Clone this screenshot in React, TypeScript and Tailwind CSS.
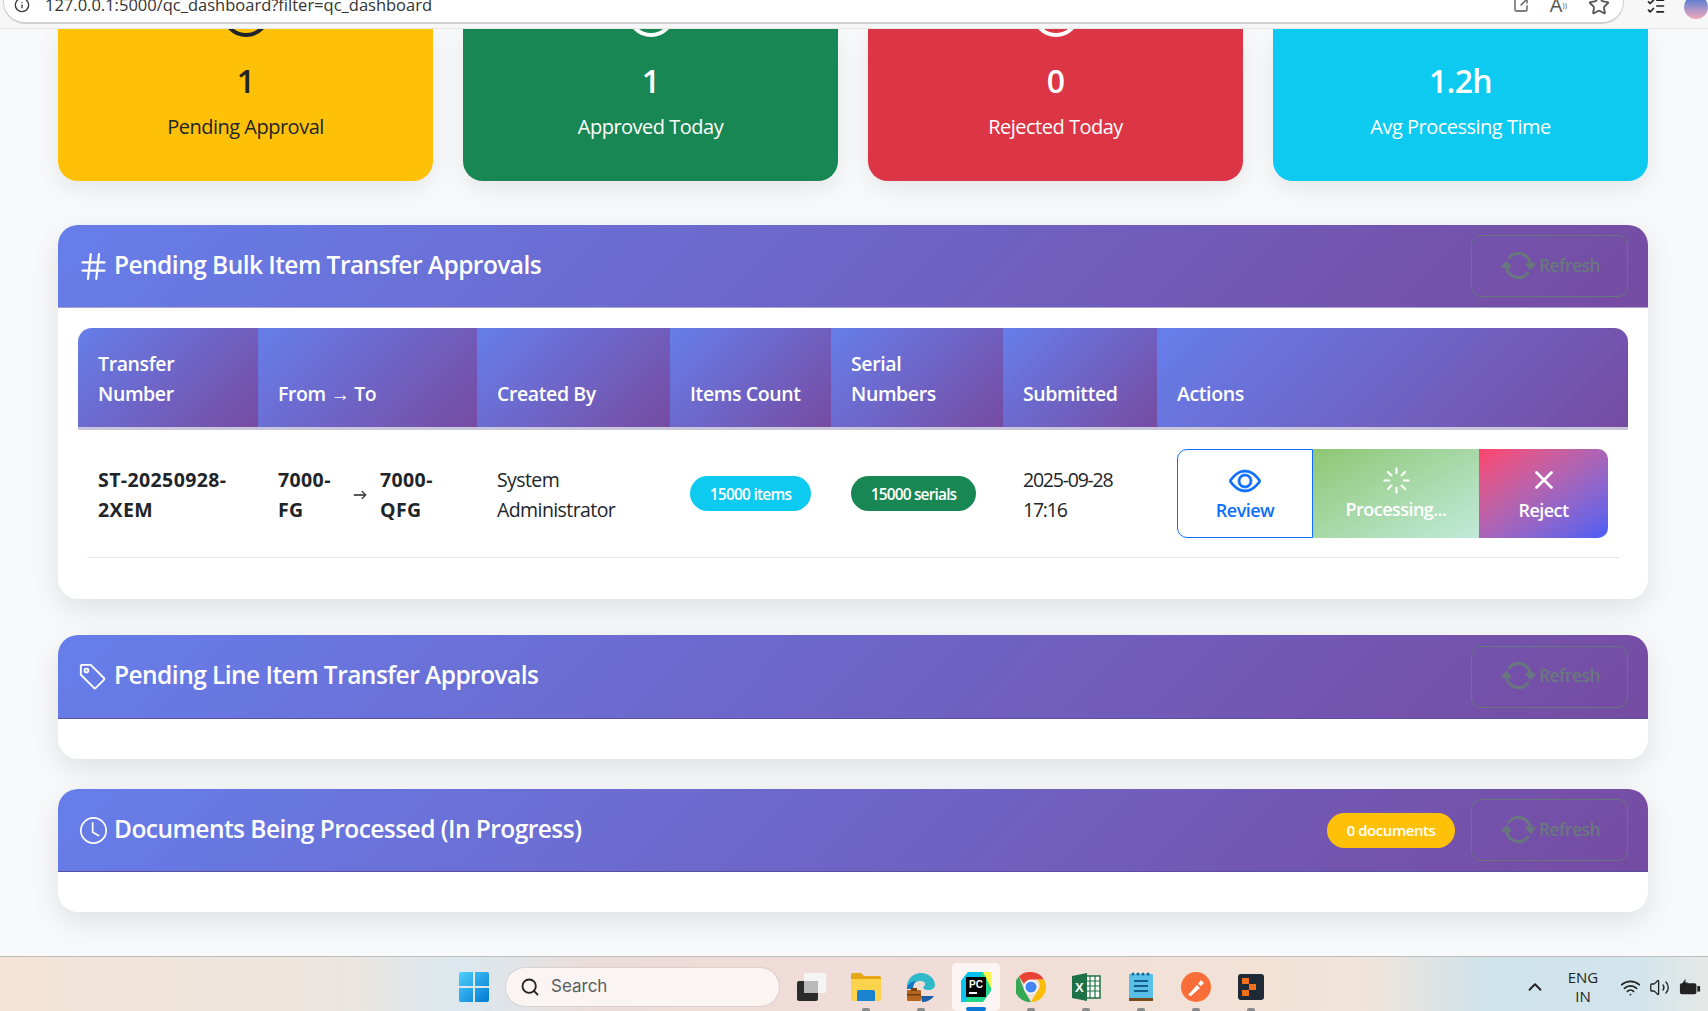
import { ReactNode } from 'react'
import { BsArrowRepeat, BsClock, BsEye, BsTag, BsArrowRight } from 'react-icons/bs'
import { ChevronUp, Hash, Loader, Search, Star, SquareArrowOutUpRight, Volume2, Wifi, Info, ListChecks, X } from 'lucide-react'

const headerGradient = 'bg-[linear-gradient(135deg,#667eea,#764ba2)]'

function StatCard({ color, value, label, ring }: { color: string; value: string; label: string; ring?: string }) {
  return (
    <div className={`flex h-[152px] flex-col items-center rounded-b-[20px] shadow-[0_8px_24px_rgba(0,0,0,0.08)] overflow-hidden ${color}`}>
      {ring ? <div className={`-mt-[40px] h-[48px] w-[48px] shrink-0 rounded-full border-[4px] ${ring}`} /> : <div className="h-[8px] shrink-0" />}
      <div className="mt-[19px] text-[32px] font-semibold leading-[50px] tracking-[-0.02em]">{value}</div>
      <div className="mt-[6px] text-[20px] leading-[30px] tracking-[-0.025em]">{label}</div>
    </div>
  )
}

function RefreshButton() {
  return (
    <button className="flex h-[62px] w-[157px] items-center justify-center gap-[3px] rounded-[10px] border border-[#65777c] pb-[2px] pl-[2px] text-[17.5px] font-semibold tracking-[-0.03em] text-[#68797e]">
      <BsArrowRepeat className="h-[35px] w-[35px] stroke-[0.35]" />
      Refresh
    </button>
  )
}

function Section({ icon, title, badge, className, children, headerClass }: { icon: ReactNode; title: string; badge?: ReactNode; className: string; children: ReactNode; headerClass: string }) {
  return (
    <section className={`rounded-[20px] bg-white shadow-[0_10px_30px_rgba(0,0,0,0.1)] ${className}`}>
      <div className={`flex items-center rounded-t-[20px] ${headerGradient} pl-[18px] pr-[20px] ${headerClass}`}>
        <span className="flex w-[34px] shrink-0 items-center justify-center text-white">{icon}</span>
        <h2 className="-mt-[2px] ml-[4px] text-[24.5px] font-semibold tracking-[-0.022em] text-white">{title}</h2>
        <div className="ml-auto flex items-center gap-[16px]">
          {badge}
          <RefreshButton />
        </div>
      </div>
      {children}
    </section>
  )
}

function Th({ width, children, rounded }: { width?: number; children: ReactNode; rounded?: string }) {
  return (
    <th style={width ? { width } : undefined} className={`${headerGradient} ${rounded ?? ''} px-[20px] pb-[18px] pt-[10px] text-left align-bottom text-[19.5px] font-semibold leading-[30px] tracking-[-0.02em] text-white`}>
      {children}
    </th>
  )
}

function BulkTable() {
  return (
    <div className="px-[20px] pb-[41px] pt-[20px]">
      <table className="w-full table-fixed border-collapse">
        <thead className="border-b-[3px] border-[#c9c6dc]">
          <tr className="h-[100px]">
            <Th width={180} rounded="rounded-tl-[14px]">Transfer Number</Th>
            <Th width={219}>From → To</Th>
            <Th width={193}>Created By</Th>
            <Th width={161}>Items Count</Th>
            <Th width={172}>Serial Numbers</Th>
            <Th width={154}>Submitted</Th>
            <Th rounded="rounded-tr-[14px]">Actions</Th>
          </tr>
        </thead>
        <tbody>
          <tr className="h-[130px] text-[19.5px] leading-[30px] tracking-[-0.03em] text-[#212529]">
            <td className="px-[20px] pt-[2px] font-bold tracking-[0.02em]">ST-20250928-2XEM</td>
            <td className="px-[20px] pt-[2px] font-bold tracking-[0.02em]">
              <div className="flex items-center">
                <span className="w-[62px] shrink-0">7000-FG</span>
                <BsArrowRight className="mx-[13px] h-[14px] w-[14px] shrink-0 stroke-[0.6]" />
                <span className="w-[70px]">7000-QFG</span>
              </div>
            </td>
            <td className="px-[20px] pt-[2px]">System Administrator</td>
            <td className="px-[20px]">
              <span className="inline-flex h-[35px] w-[121px] items-center justify-center rounded-full bg-[#0dcaf0] text-[15.5px] font-semibold tracking-[-0.05em] text-white">15000 items</span>
            </td>
            <td className="px-[20px]">
              <span className="inline-flex h-[35px] w-[125px] items-center justify-center rounded-full bg-[#198754] text-[15.5px] font-semibold tracking-[-0.055em] text-white">15000 serials</span>
            </td>
            <td className="px-[20px] pt-[2px] tracking-[-0.063em]">2025-09-28 17:16</td>
            <td className="px-[20px]">
              <div className="flex h-[89px] w-[431px] text-[18px] font-semibold leading-[24px] tracking-[-0.03em]">
                <button className="flex w-[136px] flex-col items-center justify-center rounded-l-[10px] border border-[#0d6efd] bg-white text-[#0d6efd]">
                  <BsEye className="mb-[1px] h-[32px] w-[32px] stroke-[0.4]" />
                  Review
                </button>
                <button className="flex w-[166px] flex-col items-center justify-center bg-gradient-to-br from-[#8fc673] to-[#c1ead9] text-white">
                  <Loader className="mb-[2px] h-[29px] w-[29px]" strokeWidth={1.8} />
                  Processing...
                </button>
                <button className="flex flex-1 flex-col items-center justify-center rounded-r-[10px] bg-gradient-to-br from-[#ff416c] to-[#4a5cf6] text-white">
                  <X className="mb-[3px] h-[30px] w-[30px]" strokeWidth={2.2} />
                  Reject
                </button>
              </div>
            </td>
          </tr>
        </tbody>
      </table>
      <div className="mx-[9px] -mt-px border-b border-[#e4e6ea]" />
    </div>
  )
}

function TrayIcon({ children, active, idle }: { children: ReactNode; active?: boolean; idle?: boolean }) {
  return (
    <div className={`relative flex h-[48px] w-[48px] mx-[3.5px] items-center justify-center rounded-[5px] ${active ? 'bg-white/70' : ''}`}>
      {children}
      {active && <span className="absolute bottom-0 h-[4px] w-[20px] rounded-full bg-[#0a78d4]" />}
      {!active && !idle && <span className="absolute -bottom-[1px] h-[4px] w-[8px] rounded-full bg-[#8a8a8a]" />}
    </div>
  )
}

function TaskBar() {
  return (
    <footer className="flex h-[55px] shrink-0 items-center border-t border-[#bdbdbd] pl-[459px] pr-[7px] pt-[6px]" style={{ backgroundImage: 'linear-gradient(90deg,#f4e3d6 0%,#ece5df 20%,#dbe8ee 27%,#ecdcd9 35%,#f0dcd8 50%,#f2e2d6 74%,#f0e4da 80%,#cfe3ea 87%,#d3e5ec 96%,#e6e8e6 100%)' }}>
      <svg viewBox="0 0 30 30" className="h-[30px] w-[30px] shrink-0">
        <defs>
          <linearGradient id="win" x1="0" y1="0" x2="1" y2="1"><stop offset="0" stopColor="#4fd0fb" /><stop offset="1" stopColor="#0078d4" /></linearGradient>
        </defs>
        <path d="M2 0h12v14H0V2a2 2 0 012-2zM16 0h12a2 2 0 012 2v12H16zM0 16h14v14H2a2 2 0 01-2-2zM16 16h14v12a2 2 0 01-2 2H16z" fill="url(#win)" />
      </svg>
      <div className="ml-[17px] flex h-[38px] w-[273px] shrink-0 items-center rounded-full bg-[#faf4f3] pl-[14px] text-[17px] text-[#5c5c5c] shadow-[0_0_0_1px_rgba(0,0,0,0.06)]" style={{ fontFamily: 'Inter, "Noto Sans", sans-serif' }}>
        <Search className="mr-[11px] h-[20px] w-[20px] text-[#222]" strokeWidth={2.2} />
        Search
      </div>
      <div className="ml-[4px] flex">
        <TrayIcon idle>
          <svg viewBox="0 0 30 30" className="h-[30px] w-[30px]"><rect x="8" y="1" width="22" height="20" rx="1" fill="#f4f4f4" /><rect x="1" y="9" width="21" height="20" rx="2" fill="#2b2b2b" /><rect x="8" y="9" width="14" height="12" fill="#b9b9b9" /></svg>
        </TrayIcon>
        <TrayIcon>
          <svg viewBox="0 0 30 28" className="h-[28px] w-[30px]"><path d="M0 2a2 2 0 012-2h8l3 3h15a2 2 0 012 2v3H0z" fill="#e6a717" /><path d="M0 6h30v20a2 2 0 01-2 2H2a2 2 0 01-2-2z" fill="#fcd34d" /><path d="M6 19a2 2 0 012-2h14a2 2 0 012 2v9H6z" fill="#1a83d0" /></svg>
        </TrayIcon>
        <TrayIcon>
          <svg viewBox="0 0 30 30" className="h-[30px] w-[30px]"><path d="M1 15C1 6 8 1 15 1c8 0 14 6 14 12 0 3-3 5-7 5-3 0-5-1-5-3 2-1 3-3 1-5-3-2-9-1-11 3z" fill="#2fb9c9" /><path d="M1 15c2-4 5-6 9-6-2 2-3 5-3 8H1z" fill="#1574c4" /><path d="M15 24h13c-3 4-7 6-12 6z" fill="#1a5fa8" /><rect x="1" y="18" width="14" height="11" rx="1" fill="#b5651d" /><rect x="5" y="16" width="6" height="3" fill="#7a4310" /><rect x="1" y="22" width="14" height="1.5" fill="#6c3b0e" /></svg>
        </TrayIcon>
        <TrayIcon active>
          <svg viewBox="0 0 30 30" className="h-[30px] w-[30px]"><path d="M7 0h23v19l-8 11H0V9z" fill="#21d789" /><path d="M0 9L7 0h14L4 30H0z" fill="#07c3f2" /><path d="M22 0h8v16z" fill="#fcf84a" /><rect x="5" y="5" width="20" height="20" fill="#000" /><rect x="8" y="20" width="8" height="2" fill="#fff" /><text x="8" y="16" fontSize="10" fontWeight="700" fill="#fff" fontFamily="Liberation Sans, sans-serif">PC</text></svg>
        </TrayIcon>
        <TrayIcon>
          <svg viewBox="0 0 30 30" className="h-[30px] w-[30px]"><path d="M15 0a15 15 0 0113 7.5H15a7.5 7.5 0 00-7 4.5L3 4.5A15 15 0 0115 0z" fill="#ea4335" /><path d="M3 4.5L8.5 19 15 30A15 15 0 013 4.5z" fill="#34a853" /><path d="M28 7.5A15 15 0 0115 30l6.5-11a7.5 7.5 0 00-.5-11.5z" fill="#fbbc05" /><circle cx="15" cy="15" r="7" fill="#fff" /><circle cx="15" cy="15" r="5.6" fill="#4285f4" /></svg>
        </TrayIcon>
        <TrayIcon>
          <svg viewBox="0 0 30 30" className="h-[30px] w-[30px]"><rect x="12" y="4" width="17" height="22" fill="#fff" stroke="#1e7145" strokeWidth="1.5" /><path d="M19 4v22M24 4v22M13 9h16M13 14h16M13 19h16" stroke="#1e7145" strokeWidth="1.2" /><path d="M1 4l15-3v28L1 26z" fill="#1e7145" /><text x="4" y="20" fontSize="13" fontWeight="700" fill="#fff" fontFamily="Liberation Sans, sans-serif">X</text></svg>
        </TrayIcon>
        <TrayIcon>
          <svg viewBox="0 0 24 30" className="h-[30px] w-[24px]"><rect x="0" y="2" width="24" height="25" rx="1" fill="#58bfe6" /><rect x="0" y="26" width="24" height="3" fill="#7a4a1e" /><g fill="#0f6ca0"><circle cx="4" cy="2" r="1.6" /><circle cx="9" cy="2" r="1.6" /><circle cx="14" cy="2" r="1.6" /><circle cx="19" cy="2" r="1.6" /></g><path d="M5 9h14M5 14h14M5 19h14" stroke="#155d8a" strokeWidth="1.8" /></svg>
        </TrayIcon>
        <TrayIcon>
          <svg viewBox="0 0 30 30" className="h-[30px] w-[30px]"><circle cx="15" cy="15" r="15" fill="#f96d38" /><path d="M7 23l9-10 3 3-9 8z M17 12l3-4 3 3-3 3z" fill="#fff" /></svg>
        </TrayIcon>
        <TrayIcon>
          <svg viewBox="0 0 26 26" className="h-[26px] w-[26px]"><rect width="26" height="26" rx="3" fill="#1e2a36" /><rect x="4" y="4" width="7" height="6" fill="#f0701c" /><rect x="11" y="10" width="7" height="6" fill="#f0701c" /><rect x="4" y="16" width="7" height="6" fill="#f0701c" /></svg>
        </TrayIcon>
      </div>
      <div className="ml-auto flex items-center text-[#222]">
        <ChevronUp className="h-[22px] w-[22px]" />
        <div className="ml-[17px] w-[40px] text-center text-[15px] leading-[19px]" style={{ fontFamily: '"Open Sans", sans-serif' }}>ENG<br />IN</div>
        <Wifi className="ml-[16.5px] h-[21px] w-[21px]" />
        <Volume2 className="ml-[8px] h-[21px] w-[21px]" strokeWidth={1.5} />
        <svg viewBox="0 0 24 18" className="ml-[9.5px] h-[18px] w-[22px]"><rect x="1" y="5" width="18" height="12" rx="2" fill="#222" /><rect x="20" y="8" width="3" height="6" fill="#222" /><path d="M7 0L3 6h3l-1 4 5-6H7z" fill="#222" /></svg>
      </div>
    </footer>
  )
}

export default function App() {
  return (
    <div className="flex h-[1011px] flex-col overflow-hidden bg-[#f8f9fa]" style={{ fontFamily: '"Open Sans", "Noto Sans", sans-serif' }}>
      <header className="flex h-[29px] shrink-0 border-b border-[#e7e7e7] bg-[#f7f7f7]">
        <div className="-mt-[20px] ml-[3px] flex h-[44px] w-[1624px] items-end rounded-b-[22px] border-b-2 border-r border-l border-[#cfcfcf] bg-white pb-[6px] pl-[10px] pr-[13px] text-[16.5px] leading-[22px] text-[#333]">
          <Info className="mb-[3px] h-[16px] w-[16px]" />
          <span className="ml-[15px]" style={{ fontFamily: '"Open Sans", sans-serif' }}>127.0.0.1:5000/qc_dashboard?filter=qc_dashboard</span>
          <div className="ml-auto flex items-center gap-[21px] text-[#555]">
            <SquareArrowOutUpRight className="h-[16px] w-[16px]" />
            <span className="text-[20px] leading-[16px]">A<sup className="text-[8px]">))</sup></span>
            <Star className="h-[22px] w-[22px]" />
          </div>
        </div>
        <ListChecks className="ml-[22px] mt-[-4px] h-[20px] w-[20px] text-[#222]" />
        <div className="ml-[18px] -mt-[5px] h-[24px] w-[24px] rounded-full bg-gradient-to-b from-[#2f6fd6] to-[#f5a8b8]" />
      </header>
      <main className="flex-1 overflow-hidden pl-[58px] pr-[60px]">
        <div className="grid grid-cols-4 gap-[30px]">
          <StatCard color="bg-[#ffc107] text-[#212529]" value="1" label="Pending Approval" ring="border-[#212529]" />
          <StatCard color="bg-[#198754] text-white" value="1" label="Approved Today" ring="border-white" />
          <StatCard color="bg-[#dc3545] text-white" value="0" label="Rejected Today" ring="border-white" />
          <StatCard color="bg-[#0dcaf0] text-white" value="1.2h" label="Avg Processing Time" />
        </div>
        <Section icon={<Hash className="h-[33px] w-[33px] shrink-0" strokeWidth={1.6} />} title="Pending Bulk Item Transfer Approvals" className="mt-[44px]" headerClass="h-[83px] border-b border-[#a9a4cf]">
          <BulkTable />
        </Section>
        <Section icon={<BsTag className="h-[30px] w-[30px]" />} title="Pending Line Item Transfer Approvals" className="mt-[36px] pb-[40px]" headerClass="h-[84px] border-b border-[#5a4fa0]">
          <span />
        </Section>
        <Section
          icon={<BsClock className="h-[27px] w-[27px]" />}
          title="Documents Being Processed (In Progress)"
          className="mt-[30px] pb-[40px]"
          headerClass="h-[83px] border-b border-[#5a4fa0]"
          badge={<span className="flex h-[35px] w-[128px] items-center justify-center rounded-full bg-[#ffc107] text-[15px] font-semibold tracking-[-0.03em] text-white">0 documents</span>}
        >
          <span />
        </Section>
      </main>
      <TaskBar />
    </div>
  )
}
